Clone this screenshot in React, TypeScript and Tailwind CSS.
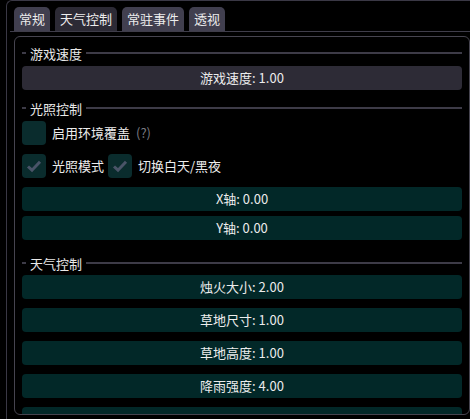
import React from "react";

const font = { fontFamily: '"Noto Sans CJK SC", "Noto Sans", sans-serif' };

const Separator = ({ label, className }: { label: string; className?: string }) => (
  <div className={`flex items-center h-[16px] ${className ?? ""}`}>
    <div className="w-[4px] h-[2px] bg-[#3d3b47]" />
    <span className="px-[4px] text-[13px] leading-none text-[#e8e8e8]">{label}</span>
    <div className="flex-1 h-[2px] bg-[#3d3b47]" />
  </div>
);

const Slider = ({
  label,
  teal = true,
  className,
}: {
  label?: string;
  teal?: boolean;
  className?: string;
}) => (
  <div
    className={`h-[24px] rounded-[4px] flex items-center justify-center text-[13px] text-[#ececec] ${
      teal ? "bg-[#022828]" : "bg-[#2d2b36]"
    } ${className ?? ""}`}
  >
    {label}
  </div>
);

const Checkbox = ({ checked }: { checked: boolean }) => (
  <div className="w-[24px] h-[24px] rounded-[4px] bg-[#0a2c2d] flex items-center justify-center">
    {checked && (
      <svg width="18" height="18" viewBox="0 0 18 18">
        <path d="M3 9.5 L7 13.2 L15 4.8" fill="none" stroke="#4a5468" strokeWidth="3" />
      </svg>
    )}
  </div>
);

export default function App() {
  const tabs = ["常规", "天气控制", "常驻事件", "透视"];
  return (
    <div className="w-[470px] h-[419px] bg-black overflow-hidden" style={font}>
      <div className="ml-[6px] h-[430px] border-l border-t border-[#3a3845] rounded-tl-[6px]">
        {/* tab bar */}
        <div className="ml-[3px] pt-[6px] pl-[4px] flex gap-[5px] border-b border-[#3f3d4a]">
          {tabs.map((t, i) => (
            <div
              key={t}
              className={`h-[24px] px-[5px] flex items-center rounded-t-[5px] text-[13px] text-[#ececec] ${
                i === 1 ? "bg-[#2c2a35]" : "bg-[#413f4f]"
              }`}
            >
              {t}
            </div>
          ))}
        </div>

        {/* child panel */}
        <div className="mt-[4px] ml-[7px] w-[456px] h-[379px] border border-[#46444f] rounded-[6px] overflow-hidden px-[7px] pt-[8px]">
          <Separator label="游戏速度" />
          <Slider label="游戏速度: 1.00" teal={false} className="mt-[5px]" />

          <Separator label="光照控制" className="mt-[10px]" />
          <div className="mt-[5px] flex items-center gap-[6px] text-[13px] text-[#ececec]">
            <Checkbox checked={false} />
            <span>启用环境覆盖</span>
            <span className="text-[#7a7a80]">(?)</span>
          </div>
          <div className="mt-[9px] flex items-center text-[13px] text-[#ececec]">
            <Checkbox checked />
            <span className="ml-[6px]">光照模式</span>
            <div className="ml-[4px]">
              <Checkbox checked />
            </div>
            <span className="ml-[6px]">切换白天/黑夜</span>
          </div>
          <Slider label="X轴: 0.00" className="mt-[9px]" />
          <Slider label="Y轴: 0.00" className="mt-[5px]" />

          <Separator label="天气控制" className="mt-[15px]" />
          <Slider label="烛火大小: 2.00" className="mt-[4px]" />
          <Slider label="草地尺寸: 1.00" className="mt-[9px]" />
          <Slider label="草地高度: 1.00" className="mt-[9px]" />
          <Slider label="降雨强度: 4.00" className="mt-[9px]" />
          <Slider className="mt-[9px]" />
        </div>
      </div>
    </div>
  );
}
